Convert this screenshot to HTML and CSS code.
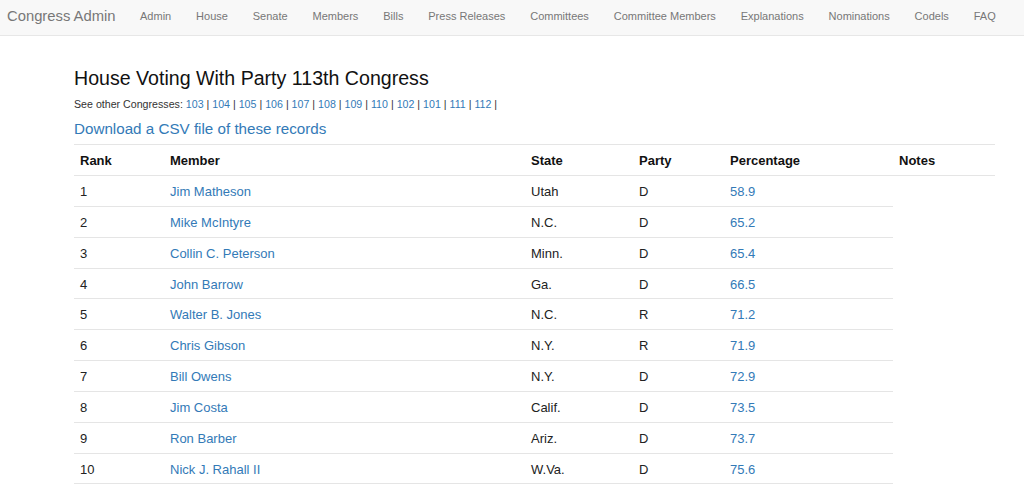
FILE: index.html
```html
<!DOCTYPE html>
<html>
<head>
<meta charset="utf-8">
<link rel="stylesheet" href="styles.css">
</head>
<body>
<nav class="navbar">
  <a class="brand" href="#">Congress Admin</a>
  <ul class="nav">
    <li><a href="#">Admin</a></li>
    <li><a href="#">House</a></li>
    <li><a href="#">Senate</a></li>
    <li><a href="#">Members</a></li>
    <li><a href="#">Bills</a></li>
    <li><a href="#">Press Releases</a></li>
    <li><a href="#">Committees</a></li>
    <li><a href="#">Committee Members</a></li>
    <li><a href="#">Explanations</a></li>
    <li><a href="#">Nominations</a></li>
    <li><a href="#">Codels</a></li>
    <li><a href="#">FAQ</a></li>
  </ul>
</nav>
<main class="content">
  <h3 class="title">House Voting With Party 113th Congress</h3>
  <p class="others">See other Congresses: <a href="#">103</a> | <a href="#">104</a> | <a href="#">105</a> | <a href="#">106</a> | <a href="#">107</a> | <a href="#">108</a> | <a href="#">109</a> | <a href="#">110</a> | <a href="#">102</a> | <a href="#">101</a> | <a href="#">111</a> | <a href="#">112</a> |</p>
  <a class="download" href="#">Download a CSV file of these records</a>
  <table class="table">
    <thead>
      <tr>
        <th class="c-rank">Rank</th>
        <th class="c-member">Member</th>
        <th class="c-state">State</th>
        <th class="c-party">Party</th>
        <th class="c-pct">Percentage</th>
        <th class="c-notes">Notes</th>
      </tr>
    </thead>
    <tbody>
      <tr><td>1</td><td><a href="#">Jim Matheson</a></td><td>Utah</td><td>D</td><td><a href="#">58.9</a></td></tr>
      <tr><td>2</td><td><a href="#">Mike McIntyre</a></td><td>N.C.</td><td>D</td><td><a href="#">65.2</a></td></tr>
      <tr><td>3</td><td><a href="#">Collin C. Peterson</a></td><td>Minn.</td><td>D</td><td><a href="#">65.4</a></td></tr>
      <tr><td>4</td><td><a href="#">John Barrow</a></td><td>Ga.</td><td>D</td><td><a href="#">66.5</a></td></tr>
      <tr><td>5</td><td><a href="#">Walter B. Jones</a></td><td>N.C.</td><td>R</td><td><a href="#">71.2</a></td></tr>
      <tr><td>6</td><td><a href="#">Chris Gibson</a></td><td>N.Y.</td><td>R</td><td><a href="#">71.9</a></td></tr>
      <tr><td>7</td><td><a href="#">Bill Owens</a></td><td>N.Y.</td><td>D</td><td><a href="#">72.9</a></td></tr>
      <tr><td>8</td><td><a href="#">Jim Costa</a></td><td>Calif.</td><td>D</td><td><a href="#">73.5</a></td></tr>
      <tr><td>9</td><td><a href="#">Ron Barber</a></td><td>Ariz.</td><td>D</td><td><a href="#">73.7</a></td></tr>
      <tr><td>10</td><td><a href="#">Nick J. Rahall II</a></td><td>W.Va.</td><td>D</td><td><a href="#">75.6</a></td></tr>
    </tbody>
  </table>
</main>
</body>
</html>
```
FILE: styles.css
```css
* { box-sizing: border-box; }
body {
  margin: 0;
  font-family: "Liberation Sans", Arial, Helvetica, sans-serif;
  color: #333;
  background: #fff;
  font-size: 13px;
}
a { color: #337ab7; text-decoration: none; }

.navbar {
  display: flex;
  align-items: center;
  height: 36px;
  padding-bottom: 4px;
  background: #f8f8f8;
  border-bottom: 1px solid #e7e7e7;
  white-space: nowrap;
  overflow: hidden;
}
.brand {
  flex-shrink: 0;
  color: #777;
  font-size: 14.8px;
  padding: 0 12px 0 7px;
}
.nav {
  display: flex;
  flex-shrink: 0;
  list-style: none;
  margin: 0;
  padding: 0;
}
.nav li { flex-shrink: 0; }
.nav a {
  display: block;
  color: #777;
  font-size: 11px;
  padding: 0 12.45px;
}

.content {
  padding: 0 29px 0 74px;
}
.title {
  margin: 30px 0 0;
  font-size: 19.6px;
  font-weight: normal;
  color: #111;
  line-height: 24px;
}
.others {
  margin: 7px 0 0;
  font-size: 10.65px;
  line-height: 14px;
  color: #333;
}
.download {
  display: block;
  margin-top: 8px;
  font-size: 15.2px;
  line-height: 18px;
  padding-top: 1px;
}
.table {
  width: 100%;
  margin-top: 6px;
  border-collapse: collapse;
  border-top: 1px solid #e5e5e5;
}
.table th {
  text-align: left;
  font-weight: bold;
  color: #111;
  padding: 8px 6px 6px;
  line-height: 16px;
  border-bottom: 1px solid #e5e5e5;
}
.table td {
  padding: 8px 6px 6px;
  line-height: 15.85px;
  border-bottom: 1px solid #e5e5e5;
  color: #222;
}
.c-rank { width: 90px; }
.c-member { width: 361px; }
.c-state { width: 108px; }
.c-party { width: 91px; }
.c-pct { width: 169px; }
.c-notes { padding-left: 7px; }
```
